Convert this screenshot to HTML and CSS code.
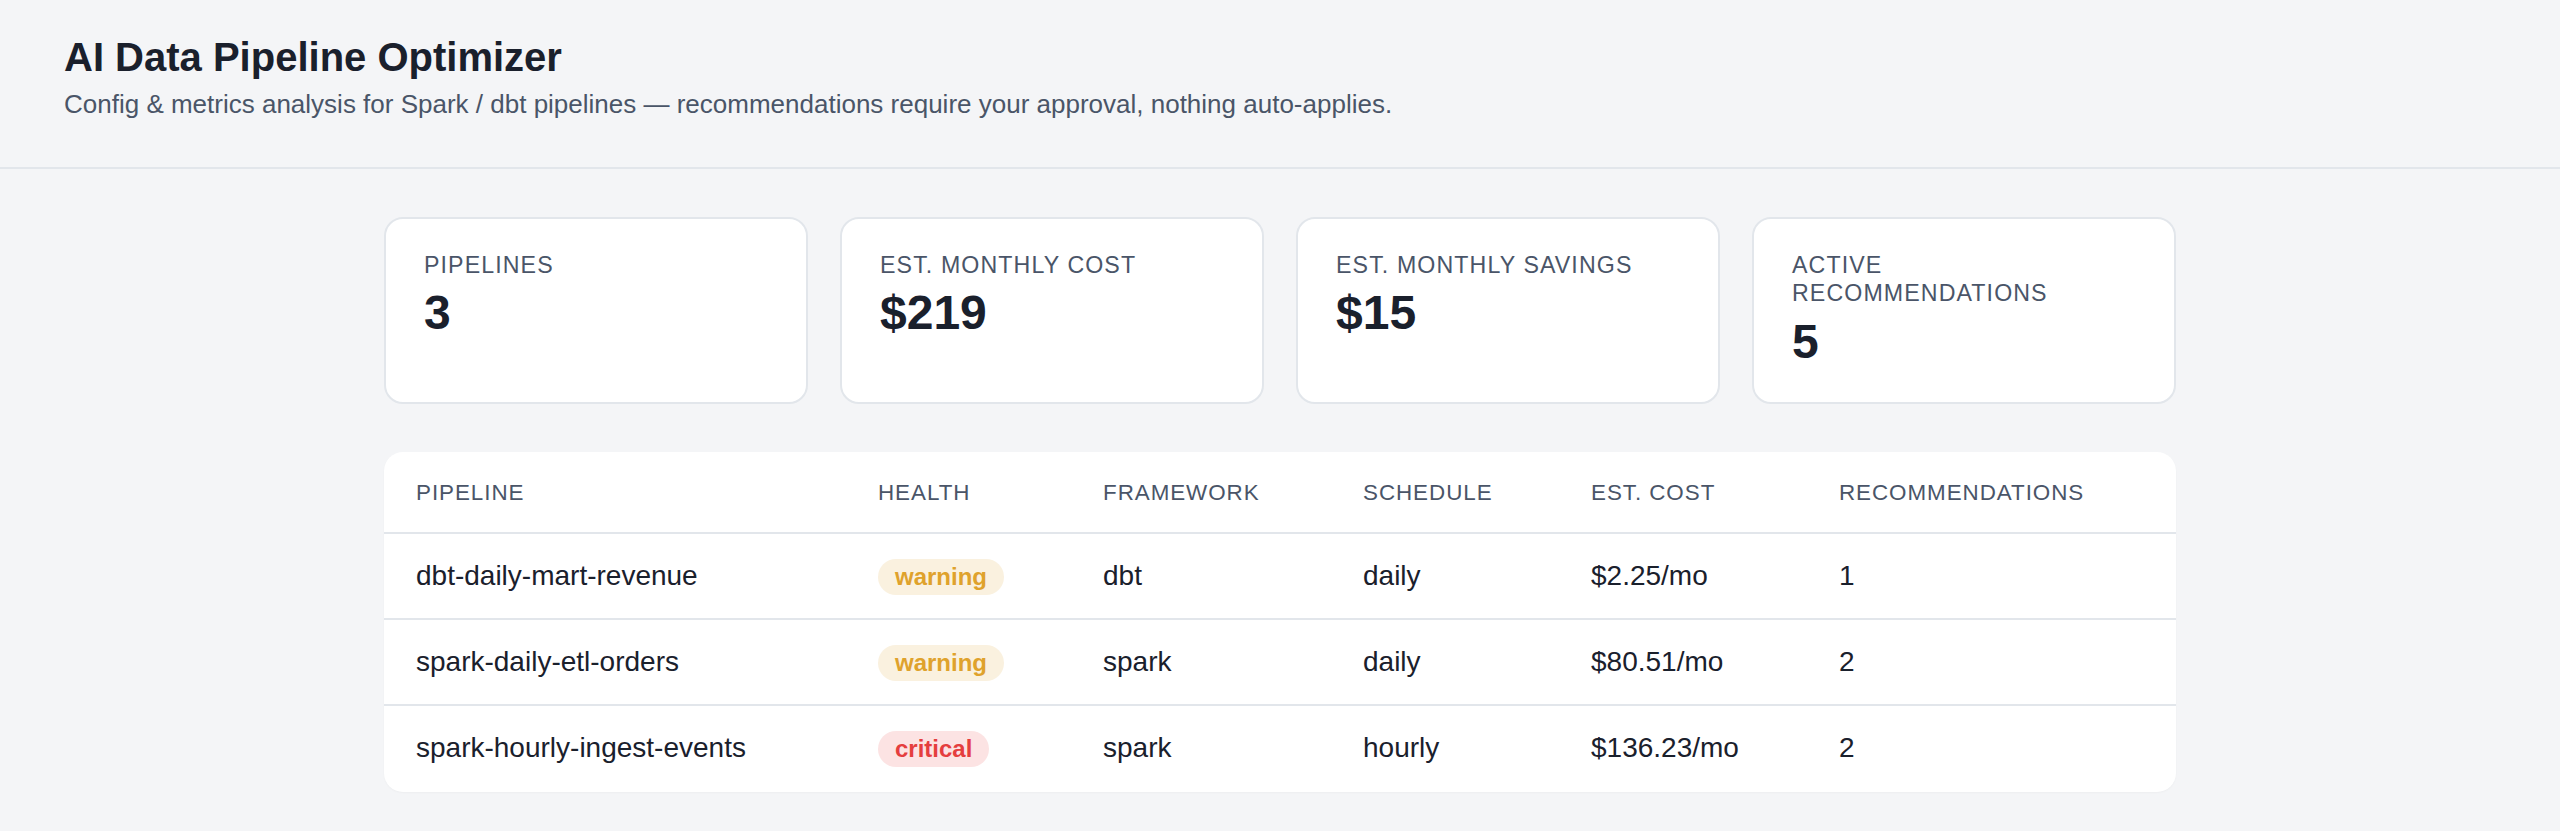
FILE: index.html
```html
<!DOCTYPE html>
<html lang="en">
<head>
    <meta charset="UTF-8">
    <meta name="viewport" content="width=device-width, initial-scale=1.0">
    <title>AI Data Pipeline Optimizer</title>
    <link rel="stylesheet" href="styles.css">
</head>
<body>
    <header class="page-header">
        <h1 class="page-title">AI Data Pipeline Optimizer</h1>
        <p class="page-subtitle">Config &amp; metrics analysis for Spark / dbt pipelines — recommendations require your approval, nothing auto-applies.</p>
    </header>

    <main class="content">
        <section class="stats">
            <div class="stat-card">
                <div class="stat-label">Pipelines</div>
                <div class="stat-value">3</div>
            </div>
            <div class="stat-card">
                <div class="stat-label">Est. Monthly Cost</div>
                <div class="stat-value">$219</div>
            </div>
            <div class="stat-card">
                <div class="stat-label">Est. Monthly Savings</div>
                <div class="stat-value">$15</div>
            </div>
            <div class="stat-card">
                <div class="stat-label">Active Recommendations</div>
                <div class="stat-value">5</div>
            </div>
        </section>

        <section class="table-card">
            <table class="pipeline-table">
                <colgroup>
                    <col class="col-name">
                    <col class="col-health">
                    <col class="col-framework">
                    <col class="col-schedule">
                    <col class="col-cost">
                    <col>
                </colgroup>
                <thead>
                    <tr>
                        <th>Pipeline</th>
                        <th>Health</th>
                        <th>Framework</th>
                        <th>Schedule</th>
                        <th>Est. Cost</th>
                        <th>Recommendations</th>
                    </tr>
                </thead>
                <tbody>
                    <tr>
                        <td>dbt-daily-mart-revenue</td>
                        <td><span class="badge badge-warning">warning</span></td>
                        <td>dbt</td>
                        <td>daily</td>
                        <td>$2.25/mo</td>
                        <td>1</td>
                    </tr>
                    <tr>
                        <td>spark-daily-etl-orders</td>
                        <td><span class="badge badge-warning">warning</span></td>
                        <td>spark</td>
                        <td>daily</td>
                        <td>$80.51/mo</td>
                        <td>2</td>
                    </tr>
                    <tr>
                        <td>spark-hourly-ingest-events</td>
                        <td><span class="badge badge-critical">critical</span></td>
                        <td>spark</td>
                        <td>hourly</td>
                        <td>$136.23/mo</td>
                        <td>2</td>
                    </tr>
                </tbody>
            </table>
        </section>
    </main>
</body>
</html>
```

FILE: styles.css
```css
/* Base */
body {
    margin: 0;
    background-color: #f4f5f7;
    color: #1a202c;
    font-family: "Liberation Sans", Arial, sans-serif;
}

/* Header */
.page-header {
    padding: 34px 64px 48px;
    border-bottom: 2px solid #e2e6eb;
}
.page-title {
    margin: 0 0 9px;
    font-size: 40px;
    font-weight: 700;
    line-height: 46px;
    color: #1a202c;
}
.page-subtitle {
    margin: 0;
    font-size: 26px;
    line-height: 30px;
    color: #4a5568;
}

/* Main area */
.content {
    max-width: 1792px;
    margin: 0 auto;
    padding: 48px 0;
}

.stats {
    display: grid;
    grid-template-columns: repeat(4, 1fr);
    gap: 32px;
    margin-bottom: 48px;
}
.stat-card {
    background: #ffffff;
    border: 2px solid #e2e6eb;
    border-radius: 19px;
    padding: 32px 38px 33.5px;
}
.stat-label {
    font-size: 23.2px;
    line-height: 28.3px;
    letter-spacing: 1.1px;
    text-transform: uppercase;
    color: #4a5568;
}
.stat-value {
    margin-top: 6px;
    font-size: 48px;
    font-weight: 700;
    line-height: 55px;
    color: #1a202c;
}

/* Table */
.table-card {
    background: #ffffff;
    border-radius: 19px;
    overflow: hidden;
    box-shadow: 0 1px 2px rgba(0, 0, 0, 0.03);
}
.pipeline-table {
    width: 100%;
    border-collapse: collapse;
    table-layout: fixed;
}
.col-name { width: 462px; }
.col-health { width: 225px; }
.col-framework { width: 260px; }
.col-schedule { width: 228px; }
.col-cost { width: 248px; }

.pipeline-table th {
    padding: 24px 32px 21.5px;
    font-size: 22.4px;
    font-weight: 400;
    line-height: 34px;
    letter-spacing: 0.95px;
    text-align: left;
    text-transform: uppercase;
    color: #4a5568;
    border-bottom: 2px solid #e2e6eb;
}
.pipeline-table td {
    padding: 22px 32px;
    font-size: 28px;
    line-height: 40px;
    color: #1a202c;
    vertical-align: middle;
    border-bottom: 2px solid #e2e6eb;
}
.pipeline-table tbody tr:last-child td {
    padding-bottom: 24px;
    border-bottom: none;
}

.badge {
    display: inline-block;
    padding: 4px 17px;
    border-radius: 999px;
    font-size: 24px;
    font-weight: 700;
    line-height: 28px;
    vertical-align: middle;
}
.badge-warning {
    background: #faf1df;
    color: #dfa22c;
}
.badge-critical {
    background: #fce3e3;
    color: #e53e3e;
}
```
